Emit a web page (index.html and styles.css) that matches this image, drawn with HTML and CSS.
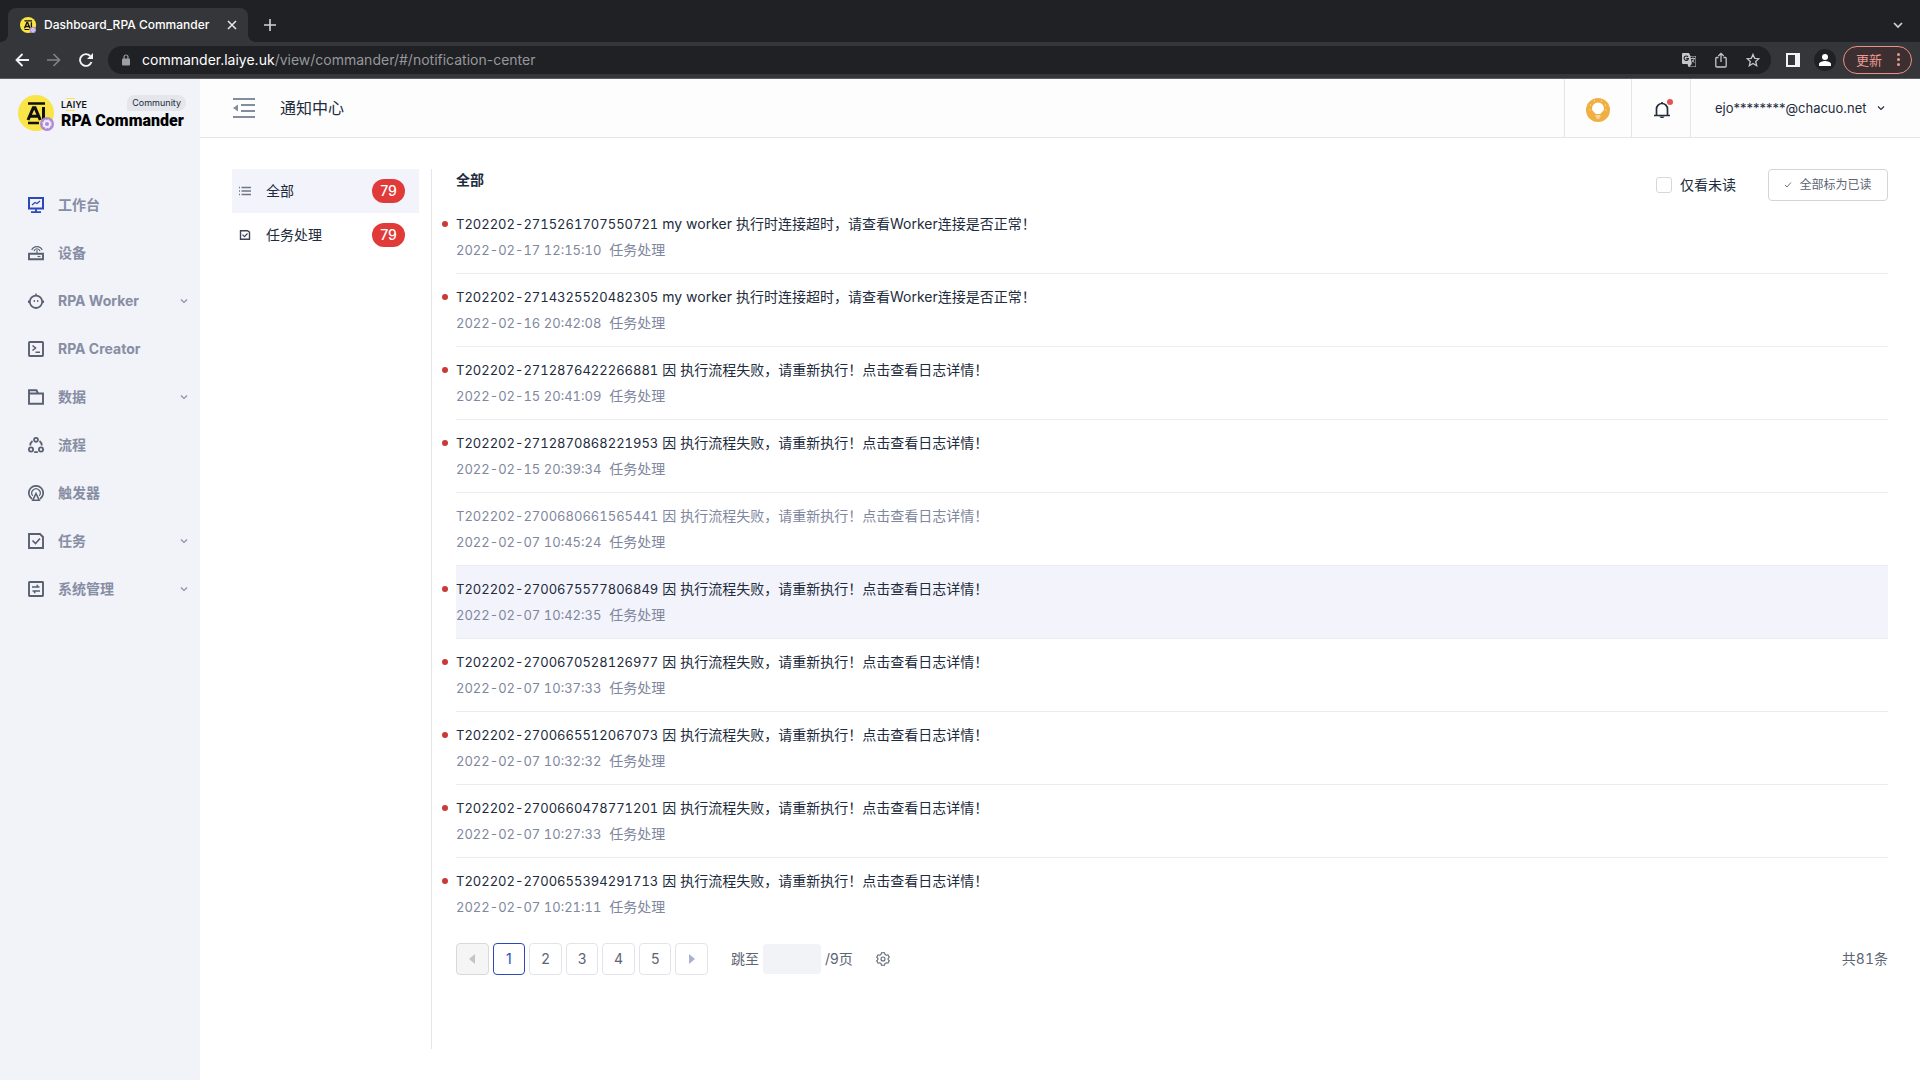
FILE: index.html
```html
<!DOCTYPE html>
<html lang="zh-CN">
<head>
<meta charset="utf-8">
<meta name="viewport" content="width=device-width, initial-scale=1">
<title>Dashboard_RPA Commander</title>
<link rel="stylesheet" href="styles.css">
</head>
<body>
<svg class="defs" aria-hidden="true">
  <symbol id="chevron" viewBox="0 0 8 8"><path d="M1 2.500 4 5.500 7 2.500" fill="none" stroke="currentColor" stroke-width="1.100"/></symbol>
  <symbol id="brand" viewBox="0 0 38 38">
    <circle cx="18" cy="18" r="18" fill="#f9e547"/>
    <path d="M10 8.500h17M10 28h11" stroke="#111" stroke-width="2.600"/>
    <path d="M10 25 15.300 12.800h1.800L22.300 25M12.300 21.200h8M25.500 12v13" fill="none" stroke="#111" stroke-width="3"/>
    <circle cx="29" cy="29" r="7" fill="#ab8bd3"/>
    <circle cx="29" cy="29" r="3" fill="none" stroke="#f2eafa" stroke-width="2"/>
    <circle cx="29" cy="29" r="4.300" fill="none" stroke="#f2eafa" stroke-width="1" stroke-dasharray="1.800 1.600"/>
  </symbol>
</svg>

<div class="browser">
  <div class="tabs">
    <div class="tab">
      <svg class="favicon" viewBox="0 0 38 38"><use href="#brand"/></svg>
      <span class="tab-title">Dashboard_RPA Commander</span>
      <button class="plain" aria-label="Close tab"><svg width="10" height="10" viewBox="0 0 10 10"><path d="M1 1l8 8M9 1 1 9" stroke="#e8eaed" stroke-width="1.500"/></svg></button>
    </div>
    <button class="plain new-tab" aria-label="New tab"><svg width="12" height="12" viewBox="0 0 12 12"><path d="M6 0v12M0 6h12" stroke="#d0d2d5" stroke-width="1.600"/></svg></button>
    <button class="plain tab-search" aria-label="Search tabs"><svg width="10" height="8" viewBox="0 0 10 8"><path d="M1 2l4 4 4-4" fill="none" stroke="#d0d2d5" stroke-width="1.700"/></svg></button>
  </div>
  <div class="toolbar">
    <button class="plain" aria-label="Back"><svg width="14" height="14" viewBox="0 0 14 14"><path d="M14 7H1.500M7.500 1l-6 6 6 6" fill="none" stroke="#f1f3f4" stroke-width="1.800"/></svg></button>
    <button class="plain" aria-label="Forward"><svg width="14" height="14" viewBox="0 0 14 14"><path d="M0 7h12.500M6.500 1l6 6-6 6" fill="none" stroke="#828487" stroke-width="1.600"/></svg></button>
    <button class="plain" aria-label="Reload"><svg width="14" height="14" viewBox="0 0 14 14"><path d="M12.500 9A5.900 5.900 0 1 1 11.300 3" fill="none" stroke="#f1f3f4" stroke-width="1.900"/><path d="M14 0v6H8z" fill="#f1f3f4"/></svg></button>
    <div class="omnibox">
      <svg width="8" height="12" viewBox="0 0 8 12"><rect y="4.500" width="8" height="7" rx="1" fill="#9aa0a6"/><path d="M2 5V3a2 2 0 0 1 4 0v2" fill="none" stroke="#9aa0a6" stroke-width="1.200"/></svg>
      <span class="url"><b>commander.laiye.uk</b>/view/commander/#/notification-center</span>
      <button class="plain" aria-label="Translate"><svg width="14" height="14" viewBox="0 0 14 14"><path d="M1 0h6l1.500 3H14v11H6.500L5.500 11H1a1 1 0 0 1-1-1V1a1 1 0 0 1 1-1z" fill="#c4c6c9"/><path d="M8.500 3.500h5v10H7.500L9.800 11z" fill="#202124"/><path d="M9 5.500h4M11 4.500v1M12.200 5.500c-.5 2-1.500 3-2.500 4M10 7c.6 1.200 1.500 2 2.500 2.600" fill="none" stroke="#c4c6c9" stroke-width=".9"/><path d="M6 3.900A2.200 2.200 0 1 0 6.400 5.600H4.200" fill="none" stroke="#202124" stroke-width="1.100"/></svg></button>
      <button class="plain" aria-label="Share"><svg width="12" height="16" viewBox="0 0 12 16"><path d="M3.500 5.500H1.700a.9.900 0 0 0-.9.900v7.700c0 .5.400.9.900.9h8.600c.5 0 .9-.4.900-.9V6.400a.9.900 0 0 0-.9-.9H8.500M6 10V1.500M3.300 4 6 1.300 8.700 4" fill="none" stroke="#c4c6c9" stroke-width="1.300"/></svg></button>
      <button class="plain" aria-label="Bookmark"><svg width="14" height="14" viewBox="0 0 14 14"><path d="M7 1.400 8.700 5.300l4.200.4-3.200 2.800 1 4.200L7 10.500l-3.700 2.200 1-4.200L1.100 5.700l4.200-.4z" fill="none" stroke="#c4c6c9" stroke-width="1.300"/></svg></button>
    </div>
    <button class="plain" aria-label="Side panel"><svg width="14" height="14" viewBox="0 0 14 14"><path d="M0 0h14v14H0zM2 2v10h7V2z" fill="#f1f3f4" fill-rule="evenodd"/></svg></button>
    <button class="plain profile" aria-label="Profile"><svg width="12" height="12" viewBox="0 0 12 12"><circle cx="6" cy="3" r="3" fill="#fff"/><path d="M0 12V10c0-2 4-3 6-3s6 1 6 3v2z" fill="#fff"/></svg></button>
    <button class="update">更新<svg width="3" height="13" viewBox="0 0 3 13"><g fill="#ee9a90"><circle cx="1.500" cy="1.500" r="1.500"/><circle cx="1.500" cy="6.500" r="1.500"/><circle cx="1.500" cy="11.500" r="1.500"/></g></svg></button>
  </div>
</div>

<div class="app">
  <aside class="sidebar">
    <div class="logo">
      <svg class="logo-mark" viewBox="0 0 38 38"><use href="#brand"/></svg>
      <div class="logo-text">
        <div class="logo-top"><span class="laiye">L<i>AI</i>YE</span><span class="edition">Community</span></div>
        <div class="product">RPA Commander</div>
      </div>
    </div>
    <nav class="menu">
      <a href="#" class="current"><svg viewBox="0 0 16 16"><path d="M1 1h14v10.500H1z" stroke-width="2"/><path d="M4 8l3-2.500 2 1L12 4" stroke-width="1.300"/><path d="M8 12v3M3 15.200h10" stroke-width="1.800"/></svg>工作台</a>
      <a href="#"><svg viewBox="0 0 16 16"><path d="M1 8.800h14v5.400H1z" stroke-width="1.900"/><path d="M9.500 11.500h3" stroke-width="1.200"/><path d="M9 8.500V5M3.700 5c2-4.500 8.500-4.500 10.500 0M6 6c1-3 5-3 6 0" stroke-width="1.100"/></svg>设备</a>
      <a href="#"><svg viewBox="0 0 16 16"><circle cx="8" cy="8.800" r="6.200" stroke-width="1.800"/><path d="M8 .5v2M.7 7.500v2.500M15.300 7.500v2.500" stroke-width="1.500"/><path d="M6.300 7v2M9.700 7v2" stroke-width="1.200"/></svg>RPA Worker<svg class="more"><use href="#chevron"/></svg></a>
      <a href="#"><svg viewBox="0 0 16 16"><rect x="1" y="1" width="14" height="14" rx=".8" stroke-width="1.900"/><path d="M4.500 4.500 7.500 7l-3 2.500M7.500 11.300h4.500" stroke-width="1.600"/></svg>RPA Creator</a>
      <a href="#"><svg viewBox="0 0 16 16"><path d="M1 14.800V1.300h7.500L10 4.500h5v10.300zM1 4.500h9" stroke-width="1.900"/></svg>数据<svg class="more"><use href="#chevron"/></svg></a>
      <a href="#"><svg viewBox="0 0 16 16"><g stroke-width="1.800"><circle cx="8" cy="2.800" r="2"/><circle cx="3" cy="12.500" r="2.100"/><circle cx="13" cy="12.500" r="2.100"/><path d="M4.500 4C3 5.200 2.200 6.800 2.200 8.500M11.500 4c1.500 1.200 2.300 2.800 2.300 4.500M6.200 14.800c1.200.4 2.400.4 3.600 0"/></g></svg>流程</a>
      <a href="#"><svg viewBox="0 0 16 16"><path d="M4 14A7.200 7.200 0 1 1 12 14" stroke-width="1.700"/><path d="M4.800 10.800A4.200 4.200 0 1 1 11.200 10.800" stroke-width="1.200"/><path d="M8 8.500 4.800 15.200h6.400z" stroke-width="1.600"/></svg>触发器</a>
      <a href="#"><svg viewBox="0 0 16 16"><path d="M1 1h11l3 3v11H1z" stroke-width="1.900"/><path d="M4.500 7.500l3 3 4.500-5" stroke-width="1.700"/></svg>任务<svg class="more"><use href="#chevron"/></svg></a>
      <a href="#"><svg viewBox="0 0 16 16"><rect x="1" y="1" width="14" height="14" rx=".5" stroke-width="1.900"/><path d="M4 6h7.500M9.300 3.800V6M4.500 10H12M6.700 10v2.200" stroke-width="1.600"/></svg>系统管理<svg class="more"><use href="#chevron"/></svg></a>
    </nav>
  </aside>

  <div class="main">
    <header class="header">
      <button class="plain" aria-label="收起菜单"><svg width="22" height="20" viewBox="0 0 22 20"><path d="M0 1h22M8 7h14M8 13h14M0 19h22" stroke="#848ca2" stroke-width="2"/><path d="M5 6.500v7L0 10z" fill="#848ca2"/></svg></button>
      <h1>通知中心</h1>
      <button class="cell tip" aria-label="提示"><svg width="24" height="24" viewBox="0 0 24 24"><circle cx="12" cy="12" r="12" fill="#efaf41"/><path d="M9.500 16c0-1.500-3.500-2.500-3.500-5.500a6 6 0 0 1 12 0c0 3-3.500 4-3.500 5.500z" fill="#fff"/><path d="M9.500 18h5M10.500 20h3" stroke="#fff" stroke-width="1"/><path d="M4 7h1M19 7h1M8 3h1M15 3h1M3.500 12h1M19.500 12h1" stroke="#fff" stroke-width=".8"/></svg></button>
      <button class="cell bell" aria-label="通知"><svg width="20" height="20" viewBox="0 0 20 20"><path d="M3.500 16V10a5.500 5.500 0 0 1 11 0V16M1 16.500h16M9 4.500V3" fill="none" stroke="#222b3c" stroke-width="1.700"/><path d="M6.500 17.500h5c-.8 2-4.200 2-5 0z" fill="#222b3c"/><circle cx="17" cy="3" r="3" fill="#e6524f"/></svg></button>
      <button class="cell account">ejo********@chacuo.net<svg width="8" height="8"><use href="#chevron"/></svg></button>
    </header>

    <div class="content">
      <nav class="types">
        <a href="#" class="on"><svg width="12" height="10" viewBox="0 0 12 10"><path d="M2.500 1.500H12M2.500 5H12M2.500 8.500H12M0 1.500h1M0 5h1M0 8.500h1" stroke="#6f7585" stroke-width="1.300"/></svg>全部<span class="badge">79</span></a>
        <a href="#"><svg width="12" height="10" viewBox="0 0 12 10"><path d="M1.500.7h7l2 1.500v7.100h-9z" fill="none" stroke="#3d4454" stroke-width="1.400"/><path d="M3.500 4.700l2 2 3-3.200" fill="none" stroke="#3d4454" stroke-width="1.200"/></svg>任务处理<span class="badge">79</span></a>
      </nav>

      <section class="notices">
        <div class="notices-head">
          <h2>全部</h2>
          <label class="unread"><input type="checkbox">仅看未读</label>
          <button class="mark"><svg width="8" height="8" viewBox="0 0 8 8"><path d="M1 4 3 6 7 1.500" fill="none" stroke="#5d6474" stroke-width=".9"/></svg>全部标为已读</button>
        </div>
        <ul class="list">
          <li class="new"><p><span class="id">T202202-2715261707550721</span> my worker 执行时连接超时，请查看Worker连接是否正常！</p><div class="meta"><time>2022-02-17 12:15:10</time><span>任务处理</span></div></li>
          <li class="new"><p><span class="id">T202202-2714325520482305</span> my worker 执行时连接超时，请查看Worker连接是否正常！</p><div class="meta"><time>2022-02-16 20:42:08</time><span>任务处理</span></div></li>
          <li class="new"><p><span class="id">T202202-2712876422266881</span> 因 执行流程失败，请重新执行！点击查看日志详情！</p><div class="meta"><time>2022-02-15 20:41:09</time><span>任务处理</span></div></li>
          <li class="new"><p><span class="id">T202202-2712870868221953</span> 因 执行流程失败，请重新执行！点击查看日志详情！</p><div class="meta"><time>2022-02-15 20:39:34</time><span>任务处理</span></div></li>
          <li><p><span class="id">T202202-2700680661565441</span> 因 执行流程失败，请重新执行！点击查看日志详情！</p><div class="meta"><time>2022-02-07 10:45:24</time><span>任务处理</span></div></li>
          <li class="new active"><p><span class="id">T202202-2700675577806849</span> 因 执行流程失败，请重新执行！点击查看日志详情！</p><div class="meta"><time>2022-02-07 10:42:35</time><span>任务处理</span></div></li>
          <li class="new"><p><span class="id">T202202-2700670528126977</span> 因 执行流程失败，请重新执行！点击查看日志详情！</p><div class="meta"><time>2022-02-07 10:37:33</time><span>任务处理</span></div></li>
          <li class="new"><p><span class="id">T202202-2700665512067073</span> 因 执行流程失败，请重新执行！点击查看日志详情！</p><div class="meta"><time>2022-02-07 10:32:32</time><span>任务处理</span></div></li>
          <li class="new"><p><span class="id">T202202-2700660478771201</span> 因 执行流程失败，请重新执行！点击查看日志详情！</p><div class="meta"><time>2022-02-07 10:27:33</time><span>任务处理</span></div></li>
          <li class="new"><p><span class="id">T202202-2700655394291713</span> 因 执行流程失败，请重新执行！点击查看日志详情！</p><div class="meta"><time>2022-02-07 10:21:11</time><span>任务处理</span></div></li>
        </ul>
        <div class="pager">
          <div class="pages">
            <button disabled aria-label="上一页"><svg width="6" height="10" viewBox="0 0 6 10"><path d="M6 0v10L0 5z" fill="#c4c4c8"/></svg></button>
            <button class="current">1</button>
            <button>2</button>
            <button>3</button>
            <button>4</button>
            <button>5</button>
            <button aria-label="下一页"><svg width="6" height="10" viewBox="0 0 6 10"><path d="M0 0v10l6-5z" fill="#adb2cc"/></svg></button>
          </div>
          <label class="jump">跳至<input type="text">/9页</label>
          <button class="plain" aria-label="设置"><svg width="14" height="14" viewBox="0 0 14 14"><path d="M5.500.8h3l.5 1.700 1.200.7 1.700-.4 1.400 2.400L12.100 6.500v1l1.200 1.300-1.400 2.400-1.700-.4-1.200.7-.5 1.700h-3L5 11.500l-1.200-.7-1.700.4L.7 8.800l1.200-1.300v-1L.7 5.200l1.400-2.400 1.700.4L5 2.500z" fill="none" stroke="#5d6474" stroke-width="1.100"/><circle cx="7" cy="7" r="2" fill="none" stroke="#5d6474" stroke-width="1.100"/></svg></button>
          <span class="total">共81条</span>
        </div>
      </section>
    </div>
  </div>
</div>
</body>
</html>
```
FILE: styles.css
```css
* { box-sizing: border-box; }

body {
  margin: 0;
  min-height: 100vh;
  display: flex;
  flex-direction: column;
  background: #fff;
  color: #222b3c;
  font: 14px/22px Inter, "Noto Sans CJK SC", sans-serif;
}

button, input { font: inherit; color: inherit; }
a { color: inherit; text-decoration: none; }
svg { display: block; flex: none; }
h1, h2, p, ul { margin: 0; padding: 0; }
ul { list-style: none; }
.defs { position: absolute; width: 0; height: 0; }
.plain { display: flex; padding: 0; border: 0; background: none; }

/* Browser window */
.browser { background: #202124; color: #fff; }
.tabs { display: flex; align-items: flex-end; height: 42px; padding: 0 17px 0 8px; }
.tab {
  position: relative;
  display: flex;
  align-items: center;
  width: 240px;
  height: 34px;
  padding: 0 11px 0 12px;
  border-radius: 8px 8px 0 0;
  background: #35363a;
}
.tab::before, .tab::after {
  content: "";
  position: absolute;
  bottom: 0;
  width: 8px;
  height: 8px;
}
.tab::before { left: -8px; background: radial-gradient(circle at 0 0, transparent 8px, #35363a 8px); }
.tab::after { right: -8px; background: radial-gradient(circle at 100% 0, transparent 8px, #35363a 8px); }
.favicon { width: 17px; height: 17px; }
.tab-title { flex: 1; margin-left: 7px; font-size: 12px; font-weight: 500; white-space: nowrap; }
.new-tab { margin: 0 0 11px 16px; }
.tab-search { margin: 0 0 13px auto; }
.toolbar {
  display: flex;
  align-items: center;
  gap: 18px;
  height: 37px;
  padding: 0 8px 1px 15px;
  border-bottom: 1px solid #5c5d61;
  background: #35363a;
}
.omnibox {
  flex: 1;
  display: flex;
  align-items: center;
  gap: 19px;
  height: 28px;
  margin: 0 -3px;
  padding: 0 11px 0 14px;
  border-radius: 14px;
  background: #202124;
}
.url { flex: 1; margin-left: -7px; color: #95989c; }
.url b { color: #fff; font-weight: 400; }
.profile {
  align-items: center;
  justify-content: center;
  width: 22px;
  height: 22px;
  margin: 0 -11px 0 -4px;
  border-radius: 50%;
  background: #202124;
}
.update {
  display: flex;
  align-items: center;
  gap: 15px;
  height: 28px;
  padding: 0 11px 0 12px;
  border: 1px solid #ee8f85;
  border-radius: 14px;
  background: #3b2f31;
  color: #ee9a90;
  font-size: 13px;
}

/* Sidebar */
.app { flex: 1; display: flex; }
.sidebar { flex: none; width: 200px; background: #f1f3f8; }
.logo { display: flex; gap: 5px; padding: 16px 14px 0 18px; }
.logo-mark { width: 38px; height: 38px; }
.logo-text { flex: 1; min-width: 0; }
.logo-top { display: flex; justify-content: space-between; align-items: flex-end; height: 16px; }
.laiye { color: #111; font: 600 9px/12px Inter, sans-serif; }
.laiye i { font-style: normal; border-bottom: 1px solid #f9e547; border-top: 1px solid #f9e547; }
.edition { padding: 0 5px; border-radius: 8px 8px 8px 0; background: #e4e6eb; font-size: 9px; line-height: 16px; }
.product { color: #000; font: 900 16px/20px Roboto, sans-serif; white-space: nowrap; }
.menu { display: flex; flex-direction: column; padding-top: 48px; color: #868da4; font-weight: 700; }
.menu a { display: flex; align-items: center; height: 48px; padding: 0 12px 0 28px; }
.menu svg { width: 16px; height: 16px; margin-right: 14px; fill: none; stroke: #596071; }
.menu .current svg { stroke: #2b49bd; }
.menu .more { width: 8px; height: 8px; margin: 0 0 0 auto; stroke: none; }

/* Header */
.main { flex: 1; min-width: 0; display: flex; flex-direction: column; }
.header {
  display: flex;
  align-items: center;
  height: 59px;
  padding-left: 33px;
  border-bottom: 1px solid #e4e6ec;
  background: #fdfdfe;
}
.header h1 { flex: 1; margin-left: 25px; font-size: 16px; font-weight: 400; }
.cell {
  display: flex;
  align-items: center;
  height: 58px;
  padding: 0 21px;
  border: 0;
  border-left: 1px solid #e4e6ec;
  background: none;
}
.tip { width: 67px; padding-top: 4px; }
.bell { width: 59px; padding-top: 2px; }
.account { justify-content: space-between; width: 230px; padding: 0 35px 0 24px; font-size: 13px; }

/* Content */
.content { flex: 1; display: flex; padding: 31px 32px; }
.types { flex: none; width: 200px; padding-right: 12px; border-right: 1px solid #e4e6ea; }
.types a { display: flex; align-items: center; height: 44px; padding: 0 14px 0 7px; }
.types svg { margin-right: 15px; }
.types .on { background: #f2f3fb; }
.badge {
  width: 33px;
  margin-left: auto;
  border-radius: 12px;
  background: #e03b38;
  color: #fff;
  font-weight: 500;
  line-height: 24px;
  text-align: center;
}
.notices { flex: 1; min-width: 0; padding-left: 24px; }
.notices-head { display: flex; align-items: flex-start; height: 32px; }
.notices-head h2 { flex: 1; font-size: 14px; font-weight: 600; }
.unread { display: flex; align-items: center; gap: 8px; height: 32px; margin-right: 32px; }
.unread input {
  appearance: none;
  width: 16px;
  height: 16px;
  margin: 0;
  border: 1px solid #d5d7db;
  border-radius: 3px;
  background: #fff;
}
.mark {
  display: flex;
  align-items: center;
  justify-content: center;
  gap: 7px;
  width: 120px;
  height: 32px;
  padding: 0;
  border: 1px solid #d3d5da;
  border-radius: 4px;
  background: #fff;
  color: #5d6474;
  font-size: 12px;
}
.list li { position: relative; padding: 12px 0; border-bottom: 1px solid #ebecef; color: #7f879e; }
.list li:last-child { border-color: transparent; }
.list .active { background: #f2f3fb; }
.list .new p { color: #222b3c; }
.list p, .meta { height: 22px; }
.list .new::before {
  content: "";
  position: absolute;
  top: 20px;
  left: -14px;
  width: 6px;
  height: 6px;
  border-radius: 50%;
  background: #c93a37;
}
.meta { display: flex; gap: 8px; margin-top: 4px; }
.id, time { font-size: 13px; font-variant-numeric: tabular-nums; }

/* Pagination */
.pager { display: flex; align-items: center; margin-top: 12px; color: #5d6474; }
.pages { display: grid; grid-template-columns: repeat(7, 1fr); gap: 4px; width: 252px; }
.pages button {
  display: flex;
  align-items: center;
  justify-content: center;
  height: 32px;
  padding: 0;
  border: 1px solid #e3e4ea;
  border-radius: 4px;
  background: #fff;
}
.pages button:disabled { border-color: #d9d9dc; background: #f5f5f5; }
.pages .current { border-color: #2b49bd; color: #2b49bd; }
.jump { display: flex; align-items: center; gap: 4px; margin: 0 23px; }
.jump input { width: 58px; height: 30px; padding: 0 8px; border: 0; border-radius: 4px; background: #f1f3f7; }
.total { margin-left: auto; font-variant-numeric: tabular-nums; }
```
